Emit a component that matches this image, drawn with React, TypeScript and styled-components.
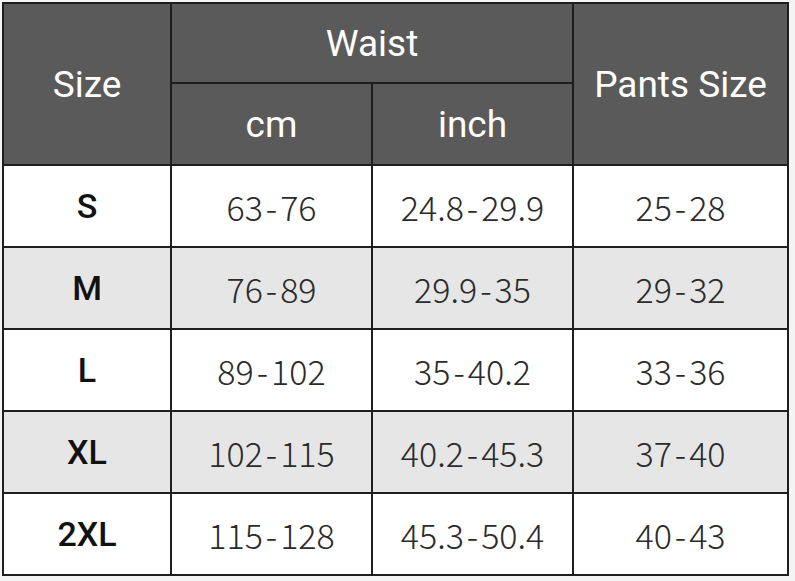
import React from "react";
import styled, { createGlobalStyle } from "styled-components";

const GlobalStyle = createGlobalStyle`
  html, body {
    margin: 0;
    padding: 0;
    background: #f4f4f4;
  }
`;

const Page = styled.div`
  padding: 2px 0 0 2px;
`;

const Grid = styled.div`
  display: grid;
  grid-template-columns: 166px 199px 199px 213px;
  grid-template-rows: 78px 80px repeat(5, 80px);
  gap: 2px;
  padding: 2px;
  width: fit-content;
  background: #1e1e1e;
`;

const HeadCell = styled.div<{ $rows?: number; $cols?: number }>`
  display: flex;
  align-items: center;
  justify-content: center;
  background: #5a5a5a;
  color: #ffffff;
  font-family: Roboto, "Liberation Sans", sans-serif;
  font-size: 37px;
  grid-row: span ${(p) => p.$rows ?? 1};
  grid-column: span ${(p) => p.$cols ?? 1};
`;

const Cell = styled.div<{ $shade: boolean }>`
  display: flex;
  align-items: center;
  justify-content: center;
  background: ${(p) => (p.$shade ? "#e6e6e6" : "#ffffff")};
  color: #2b2b2b;
  font-family: "Noto Sans CJK SC", "Noto Sans", sans-serif;
  font-size: 34px;
  font-weight: 300;
  font-variant-numeric: tabular-nums;
`;

const Label = styled(Cell)`
  font-family: Roboto, "Liberation Sans", sans-serif;
  font-size: 34px;
  font-weight: 500;
  color: #111111;
`;

const Dash = styled.span`
  margin: 0 3px;
`;

const Range = ({ value }: { value: string }) => {
  const [from, to] = value.split("-");
  return (
    <>
      {from}
      <Dash>-</Dash>
      {to}
    </>
  );
};

const rows = [
  ["S", "63-76", "24.8-29.9", "25-28"],
  ["M", "76-89", "29.9-35", "29-32"],
  ["L", "89-102", "35-40.2", "33-36"],
  ["XL", "102-115", "40.2-45.3", "37-40"],
  ["2XL", "115-128", "45.3-50.4", "40-43"],
];

export default function App() {
  return (
    <>
      <GlobalStyle />
      <Page>
        <Grid>
          <HeadCell $rows={2}>Size</HeadCell>
          <HeadCell $cols={2}>Waist</HeadCell>
          <HeadCell $rows={2}>Pants Size</HeadCell>
          <HeadCell>cm</HeadCell>
          <HeadCell>inch</HeadCell>
          {rows.map(([size, cm, inch, pants], i) => (
            <React.Fragment key={size}>
              <Label $shade={i % 2 === 1}>{size}</Label>
              <Cell $shade={i % 2 === 1}>
                <Range value={cm} />
              </Cell>
              <Cell $shade={i % 2 === 1}>
                <Range value={inch} />
              </Cell>
              <Cell $shade={i % 2 === 1}>
                <Range value={pants} />
              </Cell>
            </React.Fragment>
          ))}
        </Grid>
      </Page>
    </>
  );
}
